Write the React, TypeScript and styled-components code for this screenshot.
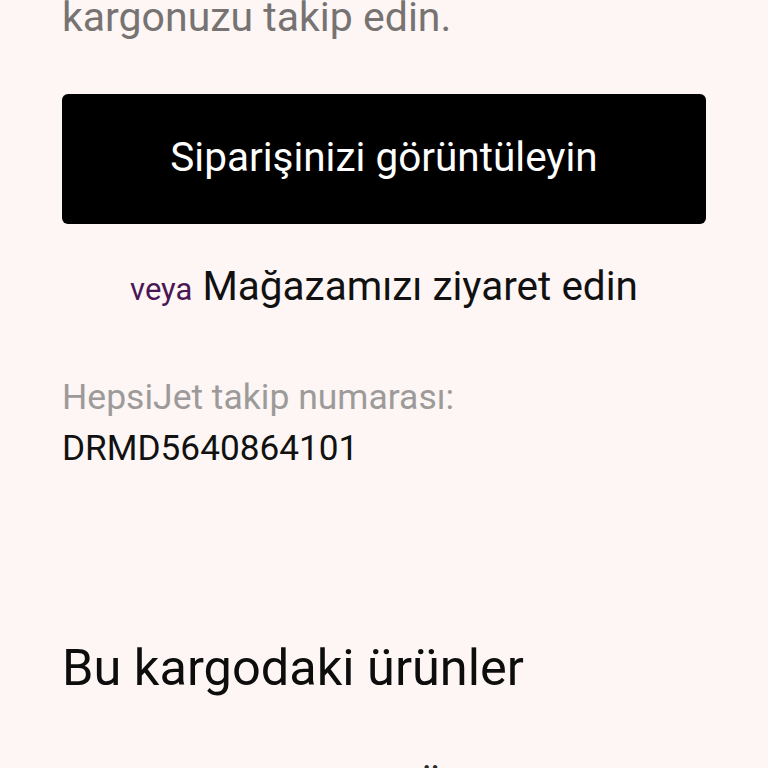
import React from "react";
import styled, { createGlobalStyle } from "styled-components";

const GlobalStyle = createGlobalStyle`
  html, body {
    margin: 0;
    padding: 0;
    background: #fdf6f4;
    font-family: Roboto, "Noto Sans", "Liberation Sans", sans-serif;
    overflow: hidden;
  }
`;

const Page = styled.div`
  width: 768px;
  height: 768px;
  box-sizing: border-box;
  padding: 0 62px;
  display: flex;
  flex-direction: column;
  overflow: hidden;

  & > * {
    flex-shrink: 0;
  }
`;

const Intro = styled.p`
  margin: -7px 0 0;
  font-size: 41px;
  line-height: 48px;
  color: #767372;
  white-space: nowrap;
`;

const PrimaryButton = styled.button`
  margin-top: 53px;
  height: 130px;
  width: 100%;
  border: none;
  border-radius: 6px;
  background: #000;
  color: #fff;
  font-family: Roboto, "Liberation Sans", sans-serif;
  font-size: 40.5px;
  display: flex;
  align-items: center;
  justify-content: center;
  padding: 0 0 4px;
`;

const OrLine = styled.div`
  margin-top: 38px;
  height: 48px;
  display: flex;
  justify-content: center;
  align-items: baseline;
  gap: 10px;
  line-height: 48px;
`;

const OrWord = styled.span`
  font-size: 31px;
  color: #4a1656;
`;

const StoreLink = styled.a`
  font-size: 40.5px;
  color: #111;
  text-decoration: none;
`;

const TrackingBlock = styled.div`
  margin-top: 62px;
  display: flex;
  flex-direction: column;
`;

const TrackingLabel = styled.span`
  font-size: 35.5px;
  line-height: 51px;
  color: #9d9b9a;
`;

const TrackingNumber = styled.span`
  font-size: 35.2px;
  line-height: 51px;
  color: #111;
`;

const SectionTitle = styled.h2`
  margin: 165px 0 0;
  font-weight: 400;
  font-size: 50.5px;
  line-height: 58px;
  color: #0d0d0d;
  white-space: nowrap;
`;

const NextLine = styled.div`
  margin-top: 67px;
  display: flex;
  justify-content: center;
  font-size: 40px;
  line-height: 48px;
  color: #2a2a2a;
  white-space: nowrap;
`;

export default function App() {
  return (
    <>
      <GlobalStyle />
      <Page>
        <Intro>kargonuzu takip edin.</Intro>
        <PrimaryButton>Siparişinizi görüntüleyin</PrimaryButton>
        <OrLine>
          <OrWord>veya</OrWord>
          <StoreLink href="#">Mağazamızı ziyaret edin</StoreLink>
        </OrLine>
        <TrackingBlock>
          <TrackingLabel>HepsiJet takip numarası:</TrackingLabel>
          <TrackingNumber>DRMD5640864101</TrackingNumber>
        </TrackingBlock>
        <SectionTitle>Bu kargodaki ürünler</SectionTitle>
        <NextLine>Siparişteki Ürünler</NextLine>
      </Page>
    </>
  );
}
